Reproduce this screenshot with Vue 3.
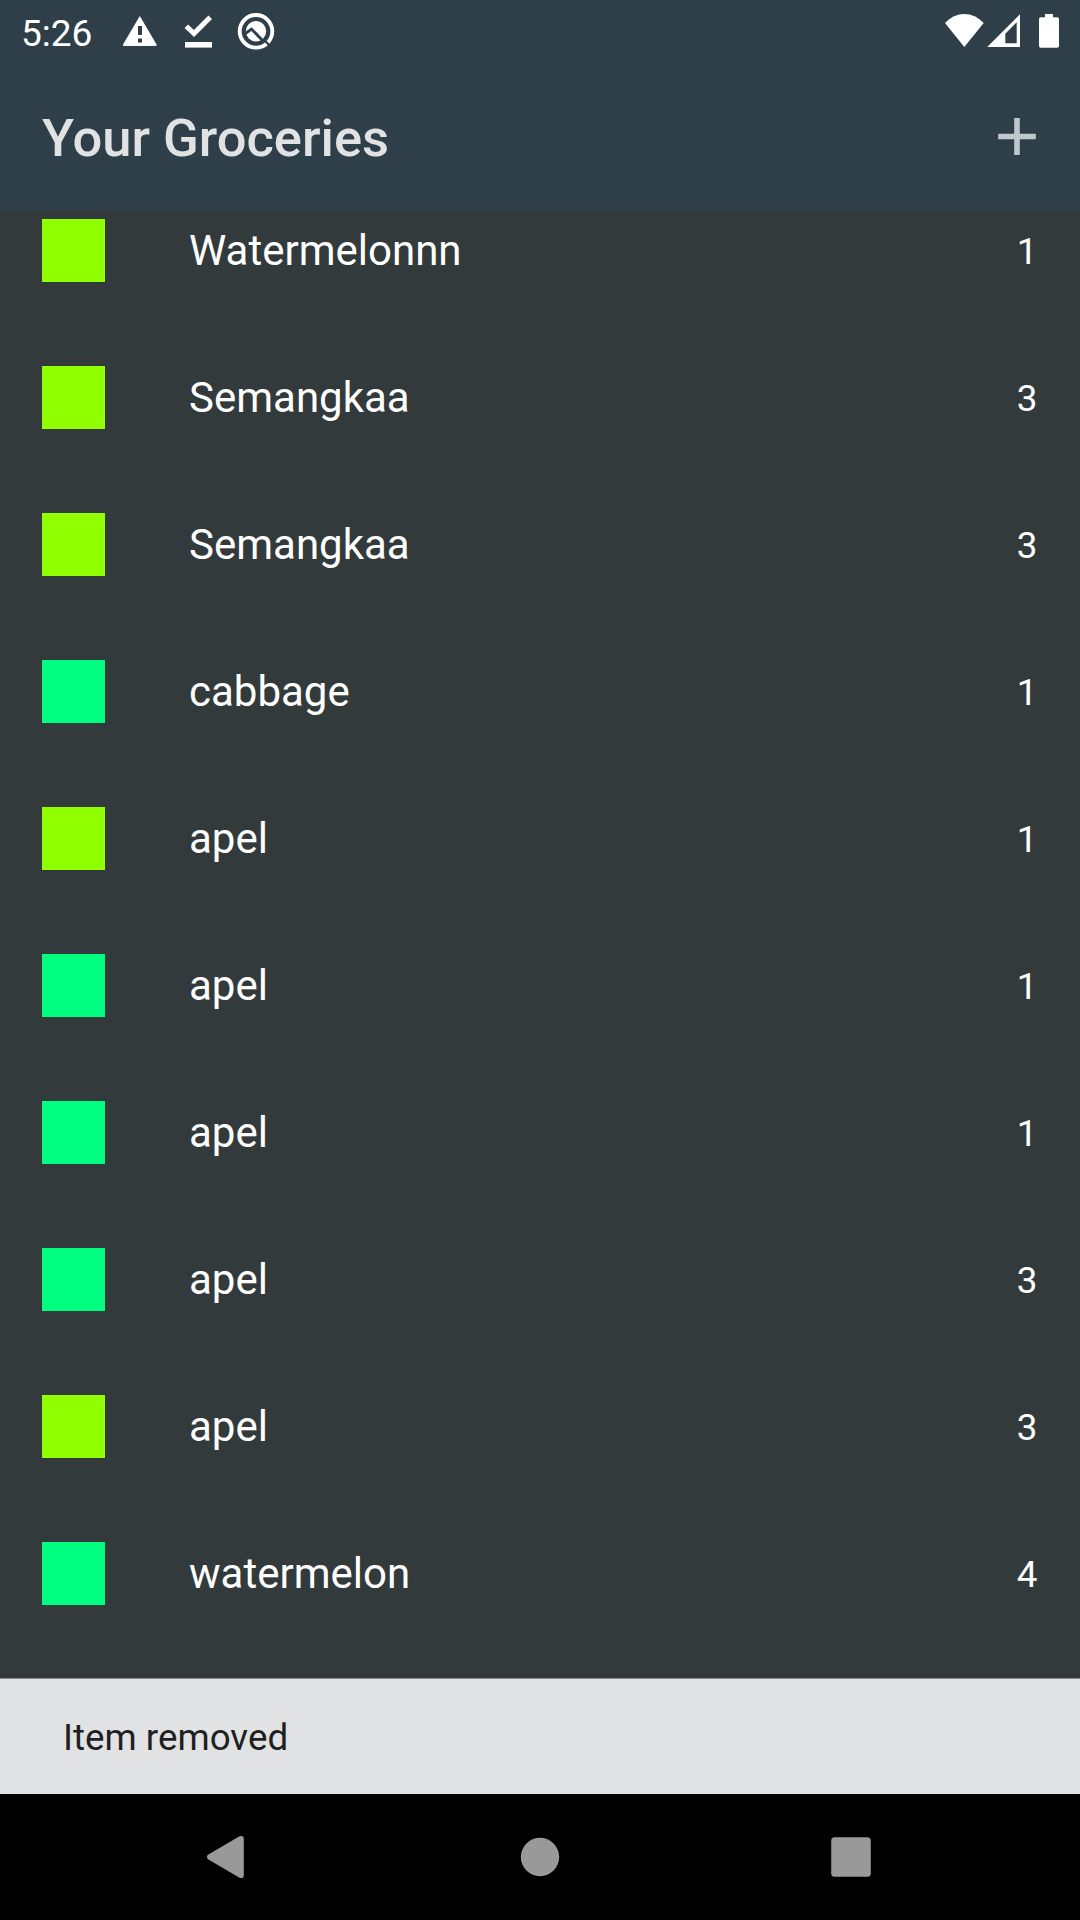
<script setup>
const LIME = '#90ff00'
const MINT = '#00ff80'

const groceries = [
  { name: 'Watermelonnn', quantity: 1, color: LIME },
  { name: 'Semangkaa', quantity: 3, color: LIME },
  { name: 'Semangkaa', quantity: 3, color: LIME },
  { name: 'cabbage', quantity: 1, color: MINT },
  { name: 'apel', quantity: 1, color: LIME },
  { name: 'apel', quantity: 1, color: MINT },
  { name: 'apel', quantity: 1, color: MINT },
  { name: 'apel', quantity: 3, color: MINT },
  { name: 'apel', quantity: 3, color: LIME },
  { name: 'watermelon', quantity: 4, color: MINT },
]
</script>

<template>
  <div class="screen">
    <header class="top">
      <div class="status">
        <span class="clock">5:26</span>
        <svg class="warning" width="36" height="64" viewBox="0 0 36 64">
          <path d="M17.8 16 L34.6 44.6 Q35 46 33.6 46 H2 Q.6 46 1 44.6 Z" fill="#fff" />
          <path d="M16 26h4v9h-4zM16 38.5h4v4h-4z" fill="#2e3f49" />
        </svg>
        <svg class="done" width="30" height="64" viewBox="0 0 30 64">
          <path d="M1 42h27v5.600h-27z" fill="#fff" />
          <path d="M2.300 26.200 L10 33.600 L26.200 17.200" fill="none" stroke="#fff" stroke-width="5" />
        </svg>
        <svg class="quick" width="38" height="64" viewBox="0 0 38 64">
          <circle cx="19" cy="31.300" r="16.300" fill="none" stroke="#fff" stroke-width="3.900" />
          <circle cx="19" cy="31.300" r="10.200" fill="#fff" />
          <path d="M7 34.500 L14.500 29 L26.500 41.500" fill="none" stroke="#2e3f49" stroke-width="2.800" />
          <path d="M26.800 39.500 L33.500 46.500" stroke="#2e3f49" stroke-width="2.200" />
        </svg>
        <div class="system">
          <svg width="40" height="64" viewBox="0 0 40 64">
            <path d="M1 23 Q9.500 14 20.300 14 T39.700 23 L20.300 47Z" fill="#fff" />
          </svg>
          <svg class="signal" width="34" height="64" viewBox="0 0 34 64">
            <path fill-rule="evenodd" d="M34 14.200V47H1.200ZM30.700 22.300 19.300 33.700V43.300H30.700Z" fill="#fff" />
          </svg>
          <svg class="battery" width="20" height="64" viewBox="0 0 20 64">
            <path d="M6 14h8v3.200h4.200q1.800 0 1.800 1.800v27q0 1.800-1.800 1.800H1.800Q0 47.800 0 46V19q0-1.800 1.800-1.800H6z" fill="#fff" />
          </svg>
        </div>
      </div>
      <div class="appbar">
        <h1>Your Groceries</h1>
        <svg width="38" height="38" viewBox="0 0 38 38">
          <path d="M16.200 0h5.600v15.700h16v5.600h-16v15.700h-5.600v-15.700h-16v-5.600h16z" fill="#bec8cd" />
        </svg>
      </div>
    </header>

    <main class="list">
      <div v-for="(item, i) in groceries" :key="i" class="row">
        <span class="swatch" :style="{ background: item.color }"></span>
        <span class="name">{{ item.name }}</span>
        <span class="quantity">{{ item.quantity }}</span>
      </div>
    </main>

    <div class="snackbar">Item removed</div>

    <nav class="navbar">
      <svg width="1080" height="126" viewBox="0 0 1080 126">
        <g fill="#999">
          <path d="M208 60.800 239.500 42.300Q243.800 40.800 243.800 45V81Q243.800 85.200 239.500 83.700L208 65.200Q205.800 63 208 60.800Z" />
          <circle cx="540" cy="63" r="19.200" />
          <rect x="831.200" y="43.200" width="39.600" height="39.600" rx="3.500" />
        </g>
      </svg>
    </nav>
  </div>
</template>

<style>
body {
  margin: 0;
}
</style>

<style scoped>
.screen {
  width: 1080px;
  height: 1920px;
  display: flex;
  flex-direction: column;
  overflow: hidden;
  background: #323a3c;
  color: #fff;
  font-family: Roboto, sans-serif;
}
svg {
  display: block;
  flex: none;
}
.top {
  height: 210px;
  flex: none;
  background: #2e3f49;
}
.status {
  height: 64px;
  display: flex;
  align-items: center;
  padding: 0 21px;
}
.clock {
  width: 101px;
  font-size: 37px;
  line-height: 64px;
  padding-top: 3px;
  box-sizing: border-box;
}
.done {
  margin-left: 26px;
}
.quick {
  margin-left: 23px;
}
.system {
  display: flex;
  margin-left: auto;
}
.signal {
  margin-left: 2px;
}
.battery {
  margin-left: 19px;
}
.appbar {
  height: 146px;
  display: flex;
  align-items: center;
  justify-content: space-between;
  padding: 0 44px 0 42px;
  box-sizing: border-box;
}
.appbar h1 {
  margin: 2px 0 0;
  font-size: 52.5px;
  font-weight: 500;
  line-height: 66px;
  color: #e1e2e4;
}
.list {
  height: 1468px;
  flex: none;
  overflow: hidden;
}
.row {
  height: 147px;
  display: flex;
  align-items: center;
  padding: 0 42px;
}
.row:first-child {
  margin-top: -33px;
}
.swatch {
  width: 63px;
  height: 63px;
  margin-right: 84px;
}
.name {
  flex: 1;
  font-size: 42px;
  line-height: 63px;
}
.quantity {
  padding-top: 2px;
  padding-right: 0.5px;
  font-size: 36.75px;
  line-height: 53px;
}
.snackbar {
  height: 116px;
  flex: none;
  box-sizing: border-box;
  border-top: 1px solid #898d8f;
  padding-left: 63px;
  background: #e1e2e4;
  color: #1f1f1f;
  font-size: 36.75px;
  line-height: 117px;
}
.navbar {
  height: 126px;
  background: #000;
}
</style>
